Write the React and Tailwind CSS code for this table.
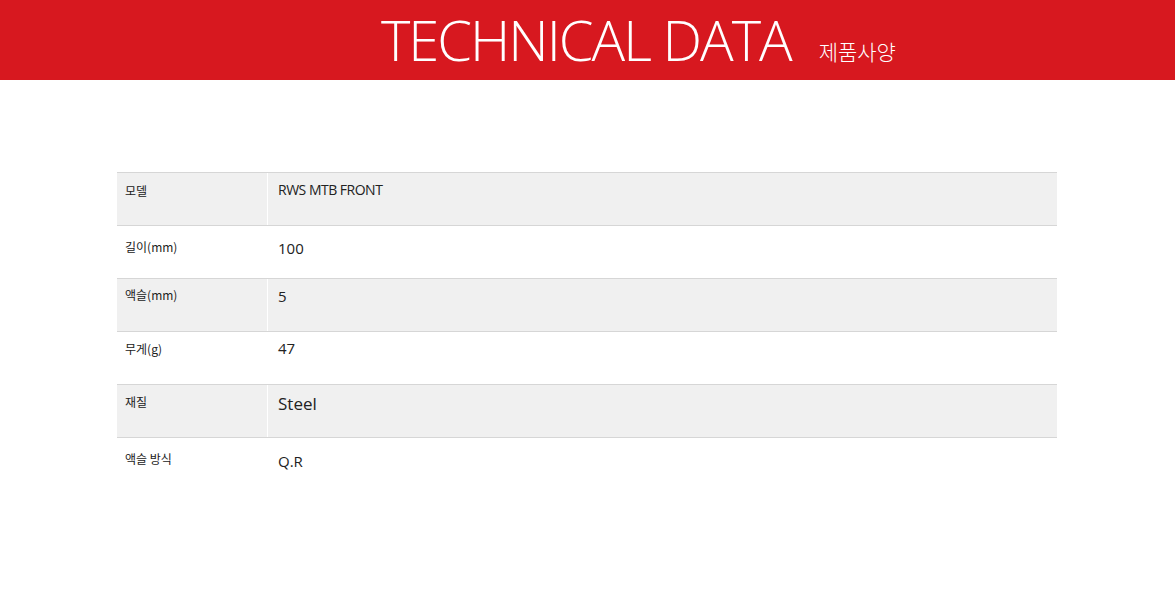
export default function App() {
  const rows = [
    { label: "모델", value: "RWS MTB FRONT", gray: true, vcls: "text-[14px] tracking-[-0.5px] pt-[6px]" },
    { label: "길이(mm)", value: "100", gray: false, vcls: "text-[15px] pt-[11px]" },
    { label: "액슬(mm)", value: "5", gray: true, vcls: "text-[15px] pt-[6px]" },
    { label: "무게(g)", value: "47", gray: false, vcls: "text-[15px] pt-[5px]" },
    { label: "재질", value: "Steel", gray: true, vcls: "text-[17px] pt-[6px]" },
    { label: "액슬 방식", value: "Q.R", gray: false, vcls: "text-[15px] pt-[12px]" },
  ];
  const lpt = ["pt-[9px]", "pt-[12px]", "pt-[7px]", "pt-[8px]", "pt-[8px]", "pt-[12px]"];
  return (
    <div className="w-[1175px] h-[591px] bg-white" style={{ fontFamily: '"Open Sans", "Noto Sans CJK KR", sans-serif' }}>
      <div className="h-[80px] bg-[#d7181f] flex items-end pl-[381px] pb-[13px] text-white">
        <span className="text-[56px] font-light leading-none tracking-[-2px]">TECHNICAL DATA</span>
        <span className="ml-[28px] mb-[5px] text-[21px] font-light leading-none" style={{ fontFamily: '"Noto Sans CJK KR", sans-serif' }}>제품사양</span>
      </div>
      <div className="pt-[92px] pl-[117px]">
        <div className="w-[940px]">
          {rows.map((r, i) => (
            <div
              key={i}
              className={
                r.gray
                  ? "h-[54px] flex bg-[#f0f0f0] border-t border-b border-[#d6d6d6]"
                  : "h-[52px] flex bg-white"
              }
            >
              <div
                className={"w-[150px] pl-[8px] text-[12px] text-[#222] " + lpt[i]}
                style={{ fontFamily: '"Noto Sans CJK KR", sans-serif' }}
              >
                {r.label}
              </div>
              <div className="w-px bg-white" />
              <div className={"flex-1 pl-[10px] text-[#222] " + r.vcls}>{r.value}</div>
            </div>
          ))}
        </div>
      </div>
    </div>
  );
}
